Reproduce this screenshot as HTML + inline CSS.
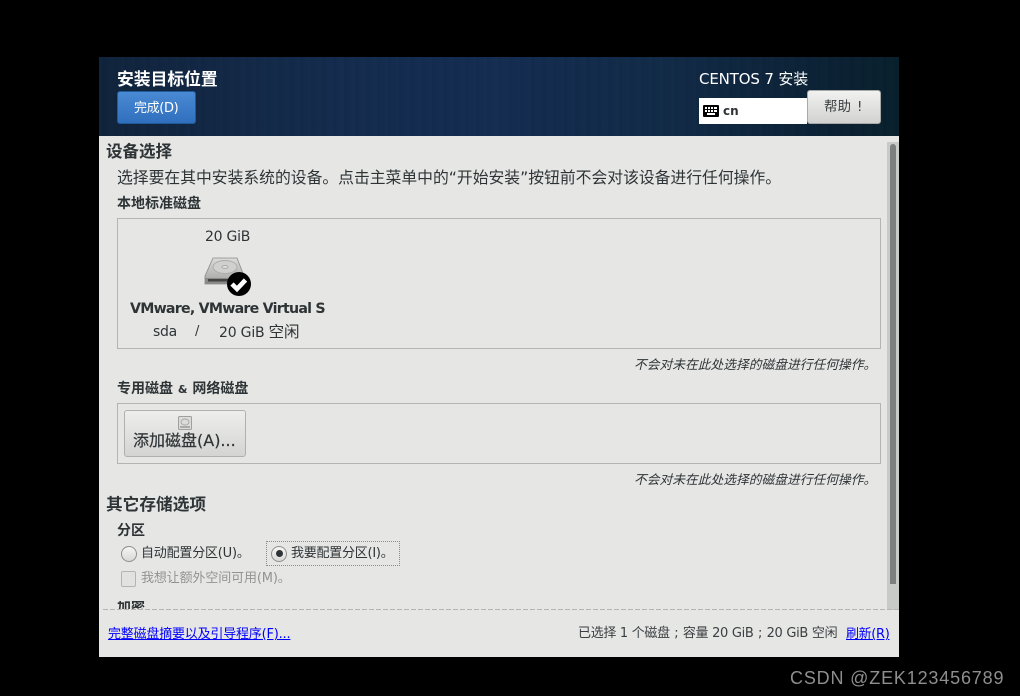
<!DOCTYPE html>
<html><head><meta charset="utf-8">
<style>
html,body{margin:0;padding:0;background:#000;}
#root{position:relative;width:1020px;height:696px;overflow:hidden;background:#000;font-family:"DejaVu Sans","Noto Sans CJK SC",sans-serif;color:#2e3436;}
#root div,#root a{position:absolute;white-space:nowrap;}
.t{line-height:20px;}
.b{font-weight:bold;}
.note{font-size:12.75px;font-style:italic;color:#2e3436;}
.s{display:inline-block;width:13px;text-align:center;}
a{color:#0000ff;text-decoration:underline;}
</style></head><body>
<div id="root">
<div style="left:99px;top:57px;width:800px;height:600px;background:#e6e6e5;"></div>
<div style="left:99px;top:57px;width:800px;height:79px;background:linear-gradient(90deg,#10233c 0%,#132b4d 30%,#132c50 50%,#112a47 70%,#0b2135 90%,#08202c 100%);"></div>
<div style="left:99px;top:57px;width:800px;height:79px;background:repeating-linear-gradient(90deg,rgba(255,255,255,0.008) 0 3px,rgba(0,0,0,0.012) 3px 7px,rgba(255,255,255,0.003) 7px 11px);"></div>
<div class="t b" style="left:117px;top:69px;font-size:16.8px;color:#fff;">安装目标位置</div>
<div style="left:117px;top:91px;width:77px;height:31px;border:1px solid #1f5b98;border-radius:3px;background:linear-gradient(#4a8ad4,#2f6fbd);"></div>
<div class="t" style="left:134px;top:99px;font-size:13px;color:#fff;letter-spacing:-0.35px;">完成(D)</div>
<div class="t" style="left:699px;top:69px;font-size:15px;color:#fff;letter-spacing:-0.15px;">CENTOS 7 安装</div>
<div style="left:699px;top:98px;width:108px;height:26px;background:#fff;"></div>
<svg style="position:absolute;left:703px;top:105px" width="16" height="12" viewBox="0 0 16 12"><rect width="16" height="12" rx="1" fill="#000"/><g fill="#fff"><rect x="2" y="2" width="2" height="2"/><rect x="5" y="2" width="2" height="2"/><rect x="8" y="2" width="2" height="2"/><rect x="11" y="2" width="3" height="2"/><rect x="2" y="5" width="2" height="2"/><rect x="5" y="5" width="2" height="2"/><rect x="8" y="5" width="2" height="2"/><rect x="11" y="5" width="3" height="2"/><rect x="4" y="8" width="8" height="2"/></g></svg>
<div class="t b" style="left:723px;top:101px;font-size:12px;color:#2e3436;">cn</div>
<div style="left:807px;top:90px;width:72px;height:32px;border:1px solid #a8a8a6;border-radius:3px;background:linear-gradient(#f2f2f1,#d2d2d0);"></div>
<div class="t" style="left:824px;top:97px;font-size:13.5px;color:#3a3f41;">帮助<span style="margin-left:6px;">!</span></div>

<div style="left:887px;top:142px;width:12px;height:468px;background:#c8cac7;"></div>
<div style="left:890px;top:144px;width:6px;height:440px;background:#7b7f7e;border-radius:3px 3px 0 0;"></div>

<div class="t b" style="left:106px;top:142px;font-size:16.5px;">设备选择</div>
<div class="t" style="left:117px;top:168px;font-size:15.8px;color:#2e3436;">选择要在其中安装系统的设备。点击主菜单中的“开始安装”按钮前不会对该设备进行任何操作。</div>
<div class="t b" style="left:117px;top:194px;font-size:14px;">本地标准磁盘</div>
<div style="left:117px;top:218px;width:762px;height:129px;border:1px solid #b4b5b3;"></div>
<div class="t" style="left:205px;top:227px;font-size:14px;letter-spacing:-0.25px;">20 GiB</div>
<svg style="position:absolute;left:204px;top:257px" width="48" height="40" viewBox="0 0 48 40">
<defs><linearGradient id="g" x1="0" y1="0" x2="0" y2="1"><stop offset="0" stop-color="#dcdcda"/><stop offset="1" stop-color="#a2a2a0"/></linearGradient></defs>
<path d="M9 1H33L40 19V27H1V19Z" fill="url(#g)" stroke="#8a8a88" stroke-width="0.8"/>
<ellipse cx="21" cy="10" rx="12" ry="6.5" fill="#d0d0ce" stroke="#aeaeac"/>
<ellipse cx="21" cy="10" rx="3" ry="1.5" fill="#dedede" stroke="#aaa"/>
<rect x="1" y="21" width="39" height="6" fill="#8a8a88"/>
<rect x="4" y="22" width="22" height="2.5" fill="#444"/>
<circle cx="35" cy="27" r="12" fill="#000"/>
<path d="M28 27L33 32L41.5 23" fill="none" stroke="#fff" stroke-width="4.6"/>
</svg>
<div class="t b" style="left:130px;top:299px;font-size:14.2px;letter-spacing:-0.76px;color:#2e3436;">VMware, VMware Virtual S</div>
<div class="t" style="left:153px;top:322px;font-size:14px;letter-spacing:-0.3px;">sda</div>
<div class="t" style="left:195px;top:322px;font-size:13px;">/</div>
<div class="t" style="left:219px;top:322px;font-size:14px;letter-spacing:-0.2px;">20 GiB <span style="font-size:15.5px;">空闲</span></div>
<div class="t note" style="left:634px;top:356px;">不会对未在此处选择的磁盘进行任何操作。</div>

<div class="t b" style="left:117px;top:379px;font-size:14px;">专用磁盘 <span style="font-size:11px;">&amp;</span> 网络磁盘</div>
<div style="left:117px;top:403px;width:762px;height:59px;border:1px solid #b4b5b3;"></div>
<div style="left:124px;top:410px;width:120px;height:45px;border:1px solid #b0b0ae;border-radius:3px;background:linear-gradient(#eeeeed,#d4d4d2);"></div>
<svg style="position:absolute;left:178px;top:416px" width="14" height="14" viewBox="0 0 14 14"><rect x="0.5" y="0.5" width="13" height="13" rx="1" fill="#dcdcda" stroke="#a0a09e"/><ellipse cx="7" cy="6" rx="4" ry="3" fill="none" stroke="#aaa"/><rect x="2" y="10" width="10" height="2" fill="#aaa"/></svg>
<div class="t" style="left:133px;top:431px;font-size:16px;letter-spacing:0;-webkit-text-stroke:0.2px #2e3436;">添加磁盘(A)...</div>
<div class="t note" style="left:634px;top:471px;">不会对未在此处选择的磁盘进行任何操作。</div>

<div class="t b" style="left:106px;top:494px;font-size:16.7px;">其它存储选项</div>
<div class="t b" style="left:117px;top:521px;font-size:14px;">分区</div>
<div style="left:121px;top:546px;width:14px;height:14px;border:1px solid #8e908e;border-radius:50%;background:linear-gradient(#f6f6f5,#d8d8d6);"></div>
<div class="t" style="left:141px;top:544px;font-size:13px;letter-spacing:-0.2px;">自动配置分区(U)。</div>
<div style="left:266px;top:541px;width:132px;height:23px;border:1px dotted #8a8a8a;"></div>
<div style="left:271px;top:546px;width:14px;height:14px;border:1px solid #8e908e;border-radius:50%;background:linear-gradient(#f6f6f5,#d8d8d6);"></div>
<div style="left:275.5px;top:549.5px;width:7px;height:7px;border-radius:50%;background:#2e3436;"></div>
<div class="t" style="left:291px;top:544px;font-size:13px;letter-spacing:-0.25px;">我要配置分区(I)。</div>
<div style="left:121px;top:571px;width:13px;height:14px;border:1px solid #b4b5b3;border-radius:2px;background:#e2e2e0;"></div>
<div class="t" style="left:141px;top:569px;font-size:13px;letter-spacing:-0.13px;color:#929492;">我想让额外空间可用(M)。</div>

<div style="left:117px;top:601px;height:8px;width:60px;overflow:hidden;"><div class="t b" style="left:0;top:-3px;font-size:14px;">加密</div></div>
<div style="left:99px;top:610px;width:800px;height:47px;background:#e6e6e5;"></div>
<div style="left:103px;top:609px;width:796px;height:1px;background:repeating-linear-gradient(90deg,#b4b5b3 0 5px,transparent 5px 7px);"></div>
<a class="t" href="#" style="left:108px;top:625px;font-size:13px;letter-spacing:-0.2px;">完整磁盘摘要以及引导程序(F)...</a>
<div class="t" style="left:578px;top:624px;font-size:13px;letter-spacing:-0.3px;color:#3a3f41;">已选择 1 个磁盘<span class="s">;</span>容量 20 GiB<span class="s">;</span>20 GiB 空闲</div>
<a class="t" href="#" style="left:846px;top:625px;font-size:13px;letter-spacing:-0.35px;">刷新(R)</a>
<div style="left:790px;top:667px;font-family:'Liberation Sans',sans-serif;font-size:18px;line-height:22px;color:#8e8e8e;letter-spacing:0.83px;">CSDN @ZEK123456789</div>
</div>
</body></html>
